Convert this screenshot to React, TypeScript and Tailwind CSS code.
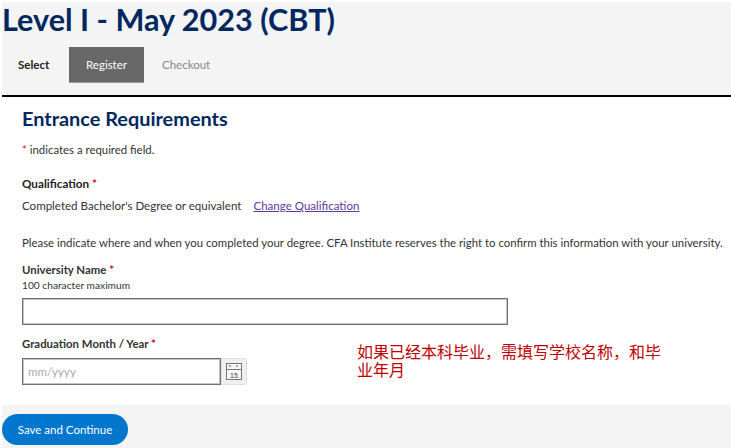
export default function App() {
  const star = <span className="text-[#c8102e]">*</span>;
  return (
    <div className="relative w-[731px] h-[448px] overflow-hidden bg-white pl-[2px] pt-[2px] font-['Lato','Noto_Sans',sans-serif] text-[11.4px] text-[#333333]">
      <div className="h-[446px] flex flex-col bg-[#f4f4f4]">
        <h1 className="h-[45px] text-[30.6px] leading-[36px] font-bold text-[#00285f] whitespace-nowrap">Level I - May 2023 (CBT)</h1>
        <nav className="flex items-stretch h-[36px] text-[11.5px]">
          <div className="w-[67px] flex items-center pl-[16px] font-bold text-[#222222]">Select</div>
          <div className="w-[75px] flex items-center justify-center bg-[#686868] border-b border-[#999999] text-white">Register</div>
          <div className="flex items-center pl-[18px] text-[#888888]">Checkout</div>
        </nav>
        <main className="mt-[12px] h-[310px] border-t-2 border-black bg-white pl-[20px] pt-[9px]">
          <h2 className="text-[19.9px] leading-[24px] font-bold text-[#00285f]">Entrance Requirements</h2>
          <p className="mt-[13px] leading-[14px]">{star} indicates a required field.</p>
          <p className="mt-[19px] leading-[14px] text-[11.7px] font-bold text-[#222222]">Qualification {star}</p>
          <p className="mt-[9px] leading-[14px] text-[11.55px] whitespace-nowrap">
            Completed Bachelor's Degree or equivalent
            <a className="ml-[12px] text-[#5f3b9b] underline">Change Qualification</a>
          </p>
          <p className="mt-[23px] leading-[14px] whitespace-nowrap">Please indicate where and when you completed your degree. CFA Institute reserves the right to confirm this information with your university.</p>
          <p className="mt-[13px] leading-[14px] font-bold">University Name {star}</p>
          <p className="mt-px leading-[14px] text-[10.2px]">100 character maximum</p>
          <input className="block mt-[6px] w-[486px] h-[27px] border border-[#707070] shadow-[inset_0_0_0_1px_#c4c4c4] bg-white" aria-label="University Name" />
          <p className="mt-[12px] leading-[14px] font-bold">Graduation Month / Year {star}</p>
          <div className="mt-[7px] flex items-stretch h-[27px]">
            <input placeholder="mm/yyyy" className="w-[199px] h-[27px] border border-[#707070] shadow-[inset_0_0_0_1px_#c4c4c4] px-[5px] text-[11.5px] placeholder:text-[#aaaaaa]" />
            <div className="w-[26px] flex items-center justify-center rounded-r-[2px] border border-[#e0e0e0] bg-[#f0f0f0]">
              <svg width="16" height="17" viewBox="0 0 16 17" fill="none">
                <rect x="0.5" y="0.5" width="15" height="16" fill="#f8f8f8" stroke="#777777" />
                <path d="M1 6.5H15" stroke="#777777" />
                <path d="M4 2V4M11 2V4" stroke="#555555" />
                <text x="8" y="14.5" textAnchor="middle" fontSize="7" fill="#444444" fontFamily="Liberation Sans, sans-serif">15</text>
              </svg>
            </div>
          </div>
        </main>
        <div className="pt-[9px]">
          <button className="w-[126px] h-[31px] rounded-full bg-[#0077cc] text-white text-[11.5px]">Save and Continue</button>
        </div>
      </div>
      <p className="absolute left-[357px] top-[342px] w-[310px] text-[16px] leading-[18px] text-[#c00000] font-['Noto_Sans_CJK_SC',sans-serif]">如果已经本科毕业，需填写学校名称，和毕业年月</p>
    </div>
  );
}
